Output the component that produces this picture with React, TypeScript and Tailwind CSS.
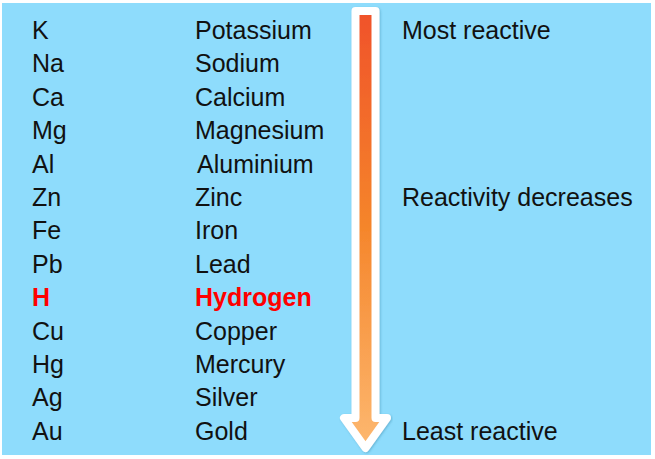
import React from "react";

const rows: [string, string, string][] = [
  ["K", "Potassium", "Most reactive"],
  ["Na", "Sodium", ""],
  ["Ca", "Calcium", ""],
  ["Mg", "Magnesium", ""],
  ["Al", "Aluminium", ""],
  ["Zn", "Zinc", "Reactivity decreases"],
  ["Fe", "Iron", ""],
  ["Pb", "Lead", ""],
  ["H", "Hydrogen", ""],
  ["Cu", "Copper", ""],
  ["Hg", "Mercury", ""],
  ["Ag", "Silver", ""],
  ["Au", "Gold", "Least reactive"],
];

function Arrow() {
  return (
    <svg width="54" height="452" viewBox="0 0 54 452" className="block">
      <defs>
        <linearGradient id="ag" x1="0" y1="0" x2="0" y2="1">
          <stop offset="0" stopColor="#f0522a" />
          <stop offset="0.5" stopColor="#f5862c" />
          <stop offset="1" stopColor="#fdb870" />
        </linearGradient>
        <filter id="sh" x="-30%" y="-5%" width="160%" height="110%">
          <feDropShadow dx="1" dy="1" stdDeviation="1.2" floodColor="#3a8fb0" floodOpacity="0.5" />
        </filter>
      </defs>
      <path
        d="M16.5 5 L36.5 5 L36.5 412 L48 412 L26.5 442 L5 412 L16.5 412 Z"
        fill="url(#ag)"
        stroke="#ffffff"
        strokeWidth="8"
        strokeLinejoin="round"
        filter="url(#sh)"
      />
    </svg>
  );
}

export default function App() {
  return (
    <div className="w-[655px] h-[459px] bg-white pt-[3px] pl-[2px]">
      <div
        className="relative w-[649px] h-[452px] bg-[#8edcfc] flex text-[25px] text-[#111111]"
        style={{ fontFamily: '"Liberation Sans", Arial, sans-serif' }}
      >
        <div className="pl-[30px] pt-[11px] flex">
          <div className="w-[163px] flex flex-col">
            {rows.map((r) => (
              <div
                key={r[0]}
                className={`h-[33.4px] leading-[33.4px] ${r[0] === "H" ? "text-[#ff0000] font-bold" : ""}`}
              >
                {r[0]}
              </div>
            ))}
          </div>
          <div className="w-[144px] flex flex-col">
            {rows.map((r) => (
              <div
                key={r[1]}
                className={`h-[33.4px] leading-[33.4px] ${r[1] === "Aluminium" ? "pl-[2px]" : ""} ${r[0] === "H" ? "text-[#ff0000] font-bold" : ""}`}
              >
                {r[1]}
              </div>
            ))}
          </div>
        </div>
        <div className="pt-[3px]">
          <Arrow />
        </div>
        <div className="pl-[9px] pt-[11px] flex flex-col">
          {rows.map((r, i) => (
            <div key={i} className="h-[33.4px] leading-[33.4px] whitespace-nowrap">
              {r[2]}
            </div>
          ))}
        </div>
      </div>
    </div>
  );
}
